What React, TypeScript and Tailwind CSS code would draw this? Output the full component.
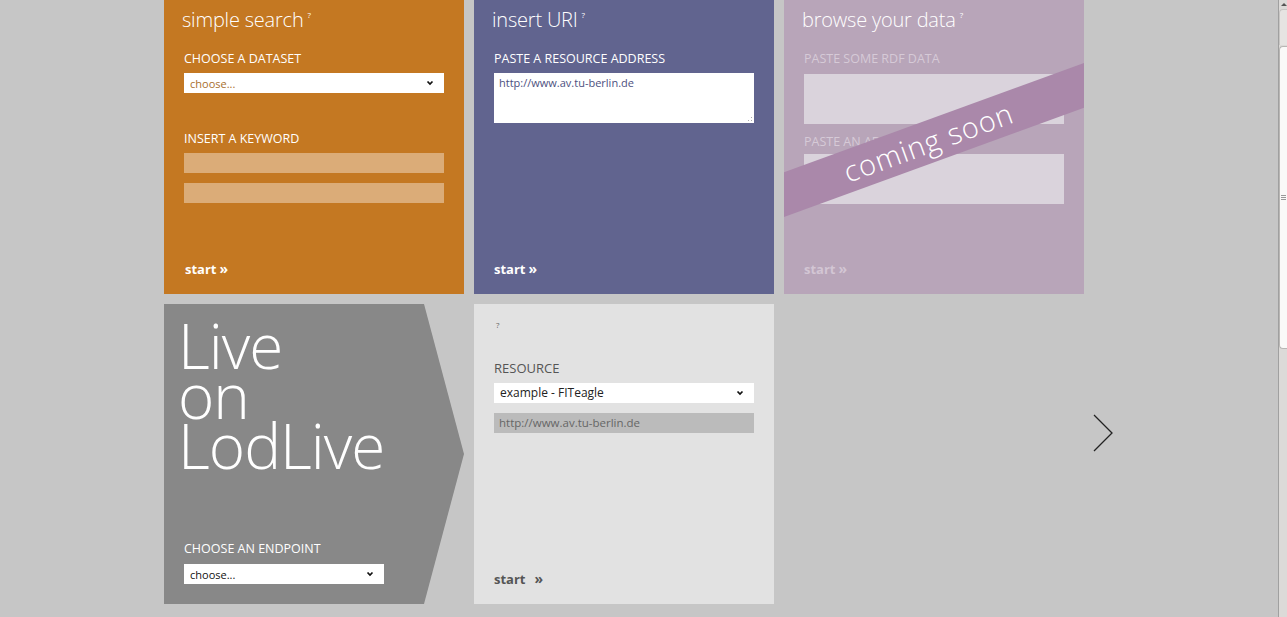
import React from "react";

const font = { fontFamily: '"Open Sans", "Liberation Sans", sans-serif' };

function Chevron({ className = "" }: { className?: string }) {
  return (
    <svg width="8" height="6" viewBox="0 0 8 6" className={className}>
      <polyline points="1.5,1.5 4,4 6.5,1.5" fill="none" stroke="#111" strokeWidth="1.7" />
    </svg>
  );
}

function Select({ text, w, textClass }: { text: string; w: string; textClass: string }) {
  return (
    <div className={`flex h-[20px] items-center justify-between bg-white pl-[6px] pr-[10px] ${w}`}>
      <span className={`text-[11px] leading-none ${textClass}`}>{text}</span>
      <Chevron />
    </div>
  );
}

function Title({ children }: { children: React.ReactNode }) {
  return (
    <div className="flex items-start pl-[18px] pt-[6px] text-white">
      <span className="text-[20px] font-light leading-[28px] tracking-[-0.2px]">{children}</span>
      <span className="ml-[4px] mt-[5px] text-[8px] leading-none">?</span>
    </div>
  );
}

function Label({ children, className = "" }: { children: React.ReactNode; className?: string }) {
  return <div className={`text-[12.5px] leading-[16px] uppercase ${className}`}>{children}</div>;
}

function Start({ className = "", gap = "ml-[3px]" }: { className?: string; gap?: string }) {
  return (
    <div className={`flex items-center text-[13px] font-bold leading-none ${className}`}>
      <span>start</span>
      <span className={`${gap} text-[14px] font-bold`}>»</span>
    </div>
  );
}

export default function App() {
  return (
    <div style={font} className="flex h-[617px] w-[1287px] overflow-hidden bg-[#c6c6c6]">
      <div className="flex-1 pl-[164px]">
        <div className="flex gap-[10px]">
          {/* simple search */}
          <div className="relative h-[294px] w-[300px] bg-[#c47822]">
            <Title>simple search</Title>
            <div className="px-[20px]">
              <Label className="mt-[17px] text-white">Choose a dataset</Label>
              <div className="mt-[6px]">
                <Select text="choose..." w="w-[260px]" textClass="text-[#a86f2e]" />
              </div>
              <Label className="mt-[38px] text-white">Insert a keyword</Label>
              <div className="mt-[6px] h-[20px] w-[260px] bg-[#dbac78]" />
              <div className="mt-[10px] h-[20px] w-[260px] bg-[#dbac78]" />
            </div>
            <Start className="absolute bottom-[18px] left-[21px] text-white" />
          </div>

          {/* insert URI */}
          <div className="relative h-[294px] w-[300px] bg-[#61648f]">
            <Title>insert URI</Title>
            <div className="px-[20px]">
              <Label className="mt-[17px] text-white">Paste a resource address</Label>
              <div className="relative mt-[6px] h-[50px] w-[260px] bg-white px-[5px] pt-[3px] text-[11px] leading-[14px]">
                <div className="text-[#4d5080]">http://www.av.tu-berlin.de</div>
                <svg width="5" height="5" viewBox="0 0 5 5" className="absolute bottom-[1px] right-[1px]">
                  <rect x="3" y="0" width="1" height="1" fill="#aaa" />
                  <rect x="3" y="3" width="1" height="1" fill="#aaa" />
                  <rect x="0" y="3" width="1" height="1" fill="#aaa" />
                </svg>
              </div>
            </div>
            <Start className="absolute bottom-[18px] left-[20px] text-white" />
          </div>

          {/* browse your data */}
          <div className="relative h-[294px] w-[300px] overflow-hidden bg-[#b8a5b9]">
            <Title>browse your data</Title>
            <div className="px-[20px]">
              <Label className="mt-[17px] text-[#d6cad7]">Paste some RDF data</Label>
              <div className="mt-[7px] h-[50px] w-[260px] bg-[#dad3dc]" />
              <Label className="mt-[10px] text-[#d6cad7]">Paste an address</Label>
              <div className="mt-[4px] h-[50px] w-[260px] bg-[#dad3dc]" />
            </div>
            <Start className="absolute bottom-[18px] left-[20px] text-[#d3c6d4]" />
            <div className="absolute left-[-100px] top-[119px] flex h-[42px] w-[500px] rotate-[-20deg] items-center justify-center bg-[#aa88aa]">
              <span className="ml-[-12px] mt-[-2px] text-[29px] font-light leading-none tracking-[1px] text-white">coming soon</span>
            </div>
          </div>
        </div>

        <div className="mt-[10px] flex gap-[10px]">
          {/* Live on LodLive */}
          <div className="relative h-[300px] w-[300px] bg-[#888888] [clip-path:polygon(0_0,260px_0,100%_50%,260px_100%,0_100%)]">
            <div className="pl-[14px] pt-[16px] text-[62px] font-light leading-[50px] tracking-[-1px] text-white">
              <div>Live</div>
              <div>on</div>
              <div>LodLive</div>
            </div>
            <div className="absolute left-[20px] top-[237px]">
              <Label className="text-white">Choose an endpoint</Label>
              <div className="mt-[7px]">
                <Select text="choose..." w="w-[200px]" textClass="text-[#111]" />
              </div>
            </div>
          </div>

          {/* resource */}
          <div className="relative h-[300px] w-[300px] bg-[#e2e2e2]">
            <div className="pl-[22px] pt-[17px] text-[8px] leading-none text-[#666]">?</div>
            <div className="px-[20px]">
              <Label className="mt-[31px] text-[13px] text-[#555]">Resource</Label>
              <div className="mt-[7px] flex h-[20px] w-[260px] items-center justify-between bg-white pl-[6px] pr-[10px]">
                <span className="text-[12px] leading-none text-[#222]">example - FITeagle</span>
                <Chevron />
              </div>
              <div className="mt-[10px] flex h-[20px] w-[260px] items-center bg-[#bbbbbb] pl-[5px]">
                <span className="text-[11.5px] leading-none text-[#666]">http://www.av.tu-berlin.de</span>
              </div>
            </div>
            <Start className="absolute bottom-[18px] left-[20px] text-[#555]" gap="ml-[9px]" />
          </div>

          {/* next arrow */}
          <div className="pl-[309px] pt-[110px]">
            <svg width="22" height="40" viewBox="0 0 22 40">
              <polyline points="1,1 19,19 1,37" fill="none" stroke="#222" strokeWidth="1.3" />
            </svg>
          </div>
        </div>
      </div>

      {/* scrollbar */}
      <div className="relative h-full w-[9px] border-l border-[#a0a0a0] bg-[#dcdad8]">
        <svg width="8" height="6" viewBox="0 0 8 6" className="absolute left-[1px] top-[2px]">
          <polygon points="4,1 7,4 1,4" fill="#555" />
        </svg>
        <div className="absolute left-[0px] right-0 top-[9px] h-[36px] rounded-tl-[4px] border-l border-t border-[#c8c6c4] bg-[#e6e4e2]" />
        <div className="absolute left-0 right-0 top-[46px] flex h-[303px] items-center justify-center rounded-l-[4px] border border-r-0 border-[#b8b6b4] bg-[#faf9f8]">
          <svg width="5" height="6" viewBox="0 0 5 6">
            <rect x="0" y="0" width="5" height="1" fill="#999" />
            <rect x="0" y="2" width="5" height="1" fill="#999" />
            <rect x="0" y="4" width="5" height="1" fill="#999" />
          </svg>
        </div>
      </div>
    </div>
  );
}
